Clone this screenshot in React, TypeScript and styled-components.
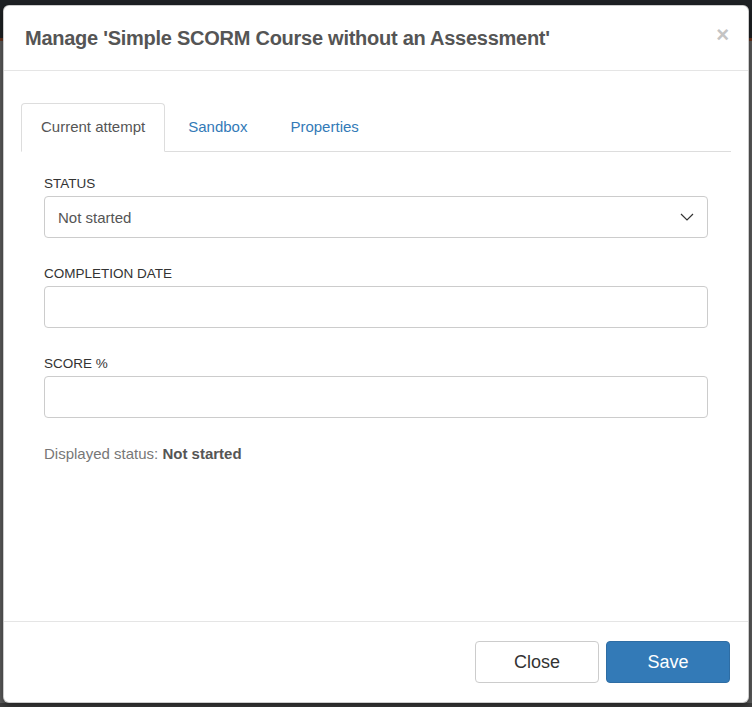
import React from "react";
import styled, { createGlobalStyle } from "styled-components";

const Global = createGlobalStyle`
  html, body { margin: 0; padding: 0; }
  body {
    font-family: "Liberation Sans", Arial, Helvetica, sans-serif;
    background: #5e5e5e;
  }
  * { box-sizing: border-box; }
`;

const Backdrop = styled.div`
  width: 752px;
  height: 707px;
  padding: 5px 3px 4px 3px;
  background:
    linear-gradient(to bottom, #1f2225 0, #1f2225 38px, #6a3521 38px, #6a3521 41px, #5f5f5f 41px, #5f5f5f 703px, #3f3f3f 703px);
  overflow: hidden;
`;

const Modal = styled.div`
  height: 698px;
  background: #fff;
  border: 1px solid rgba(0, 0, 0, 0.2);
  border-radius: 6px;
  box-shadow: 0 3px 9px rgba(0, 0, 0, 0.5);
  display: flex;
  flex-direction: column;
`;

const Header = styled.div`
  height: 65px;
  border-bottom: 1px solid #e5e5e5;
  padding: 0 19px 0 21px;
  display: flex;
  align-items: center;
  justify-content: space-between;
`;

const Title = styled.h4`
  margin: 0;
  font-size: 20px;
  font-weight: bold;
  color: #555;
  letter-spacing: -0.26px;
`;

const CloseX = styled.button`
  border: 0;
  background: transparent;
  padding: 0;
  font-family: "Liberation Sans", Arial, sans-serif;
  font-size: 22px;
  font-weight: bold;
  line-height: 1;
  color: #c4c4c4;
  cursor: pointer;
  margin-top: -6px;
`;

const Body = styled.div`
  flex: 1;
  padding: 32px 17px 0 17px;
`;

const Tabs = styled.ul`
  list-style: none;
  margin: 0;
  padding: 0;
  display: flex;
  border-bottom: 1px solid #ddd;
`;

const Tab = styled.li<{ $active?: boolean }>`
  margin-right: 3px;
  margin-bottom: -1px;
  padding: 13px 19px 14px;
  line-height: 20px;
  font-size: 15px;
  border: 1px solid ${(p) => (p.$active ? "#ddd" : "transparent")};
  border-bottom-color: ${(p) => (p.$active ? "#fff" : "transparent")};
  border-radius: 4px 4px 0 0;
  background: ${(p) => (p.$active ? "#fff" : "transparent")};
  color: ${(p) => (p.$active ? "#555" : "#337ab7")};
`;

const TabPane = styled.div`
  padding: 22px 23px 0 23px;
`;

const Group = styled.div`
  margin-bottom: 26px;
`;

const Label = styled.label`
  display: block;
  font-size: 13.5px;
  line-height: 20px;
  color: #333;
  margin-bottom: 2px;
  text-transform: uppercase;
`;

const Field = styled.div`
  height: 42px;
  border: 1px solid #ccc;
  border-radius: 4px;
  padding: 0 13px;
  display: flex;
  align-items: center;
  justify-content: space-between;
  font-size: 15px;
  color: #555;
`;

const Status = styled.div`
  font-size: 15px;
  line-height: 20px;
  color: #777;
  margin-top: 3px;
  b { color: #555; }
`;

const Footer = styled.div`
  border-top: 1px solid #e5e5e5;
  padding: 19px 18px 19px;
  display: flex;
  justify-content: flex-end;
  gap: 7px;
`;

const Btn = styled.button<{ $primary?: boolean }>`
  width: 124px;
  height: 42px;
  border-radius: 4px;
  font-family: "Liberation Sans", Arial, sans-serif;
  font-size: 18px;
  border: 1px solid ${(p) => (p.$primary ? "#2e6da4" : "#ccc")};
  background: ${(p) => (p.$primary ? "#337ab7" : "#fff")};
  color: ${(p) => (p.$primary ? "#fff" : "#333")};
`;

const Chevron = () => (
  <svg width="14" height="8" viewBox="0 0 14 8" fill="none">
    <path d="M1 1 L7 7 L13 1" stroke="#333" strokeWidth="1.2" />
  </svg>
);

export default function App() {
  return (
    <>
      <Global />
      <Backdrop>
        <Modal>
          <Header>
            <Title>Manage 'Simple SCORM Course without an Assessment'</Title>
            <CloseX>×</CloseX>
          </Header>
          <Body>
            <Tabs>
              <Tab $active>Current attempt</Tab>
              <Tab>Sandbox</Tab>
              <Tab>Properties</Tab>
            </Tabs>
            <TabPane>
              <Group>
                <Label>Status</Label>
                <Field>
                  <span>Not started</span>
                  <Chevron />
                </Field>
              </Group>
              <Group>
                <Label>Completion date</Label>
                <Field />
              </Group>
              <Group>
                <Label>Score %</Label>
                <Field />
              </Group>
              <Status>
                Displayed status: <b>Not started</b>
              </Status>
            </TabPane>
          </Body>
          <Footer>
            <Btn>Close</Btn>
            <Btn $primary>Save</Btn>
          </Footer>
        </Modal>
      </Backdrop>
    </>
  );
}
